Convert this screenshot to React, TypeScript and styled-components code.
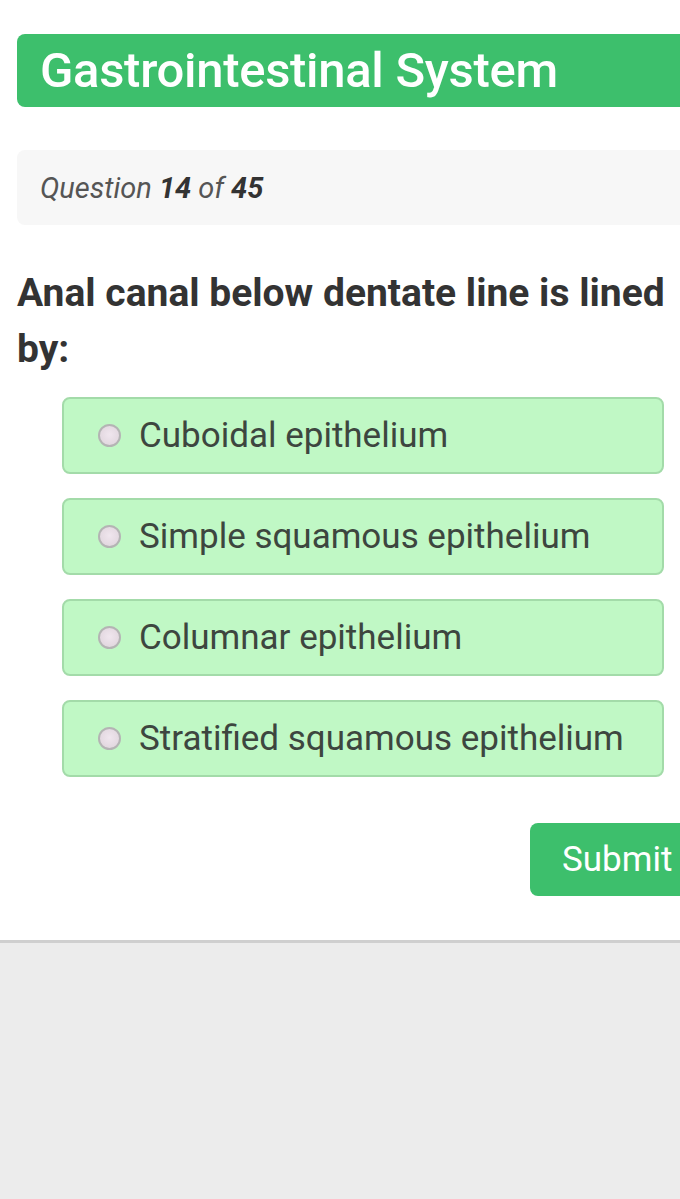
import * as React from 'react'
import styled, { createGlobalStyle } from 'styled-components'

const GlobalStyle = createGlobalStyle`
  html, body {
    margin: 0;
    padding: 0;
    background: #ececec;
    font-family: Roboto, "Liberation Sans", sans-serif;
  }
`

const Page = styled.div`
  width: 680px;
  overflow: hidden;
`

const Card = styled.div`
  background: #ffffff;
  padding: 34px 0 44px 17px;
  border-bottom: 3px solid #cfcfcf;
`

const Header = styled.div`
  width: 700px;
  height: 73px;
  box-sizing: border-box;
  background: #3dbf6c;
  border-radius: 8px 0 0 8px;
  padding-left: 23px;
  display: flex;
  align-items: center;
`

const Title = styled.h1`
  margin: 0;
  color: #ffffff;
  font-size: 49px;
  font-weight: 500;
  letter-spacing: -0.3px;
`

const Counter = styled.div`
  margin-top: 43px;
  width: 700px;
  height: 75px;
  box-sizing: border-box;
  background: #f7f7f7;
  border-radius: 8px 0 0 8px;
  padding-left: 23px;
  display: flex;
  align-items: center;
  font-style: italic;
  font-size: 29px;
  color: #555555;

  b {
    color: #333333;
    font-weight: 700;
    margin: 0 7px;
  }
`

const Question = styled.h2`
  margin: 40px 0 0 0;
  font-size: 39px;
  line-height: 56px;
  font-weight: 700;
  color: #333333;
  padding-right: 2px;
`

const Options = styled.div`
  margin: 20px 16px 0 45px;
  display: flex;
  flex-direction: column;
  gap: 24px;
`

const Option = styled.label`
  height: 77px;
  box-sizing: border-box;
  background: #c0f8c5;
  border: 2px solid #a3dba9;
  border-radius: 8px;
  display: flex;
  align-items: center;
  padding-left: 34px;
  gap: 18px;
  font-size: 35px;
  color: #3d463f;
  cursor: pointer;
`

const Radio = styled.span`
  width: 23px;
  height: 23px;
  box-sizing: border-box;
  border-radius: 50%;
  border: 2px solid #b4b4b4;
  background: radial-gradient(circle at 50% 45%, #f0e6ee 0%, #ddd2da 100%);
  flex-shrink: 0;
`

const Actions = styled.div`
  margin-top: 46px;
  display: flex;
  justify-content: flex-end;
  margin-right: -40px;
`

const Submit = styled.button`
  width: 190px;
  height: 73px;
  border: none;
  border-radius: 8px;
  background: #3dbf6c;
  color: #ffffff;
  font-family: Roboto, "Liberation Sans", sans-serif;
  font-size: 35px;
  text-align: left;
  padding-left: 32px;
`

const options = [
  'Cuboidal epithelium',
  'Simple squamous epithelium',
  'Columnar epithelium',
  'Stratified squamous epithelium',
]

export default () => {
  return (
    <Page>
      <GlobalStyle />
      <Card>
        <Header>
          <Title>Gastrointestinal System</Title>
        </Header>
        <Counter>
          Question <b>14</b> of <b>45</b>
        </Counter>
        <Question>Anal canal below dentate line is lined by:</Question>
        <Options>
          {options.map((o) => (
            <Option key={o}>
              <Radio />
              {o}
            </Option>
          ))}
        </Options>
        <Actions>
          <Submit>Submit</Submit>
        </Actions>
      </Card>
    </Page>
  )
}
